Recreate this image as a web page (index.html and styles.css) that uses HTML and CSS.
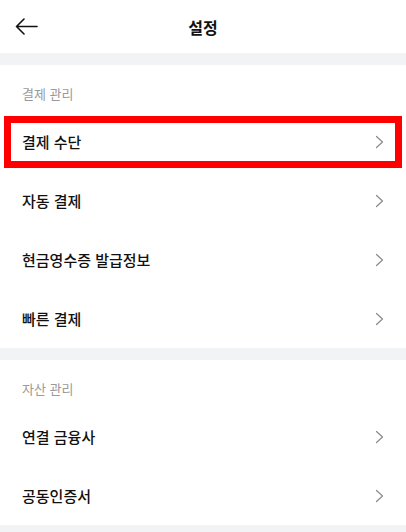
FILE: index.html
```html
<!DOCTYPE html>
<html lang="ko">
<head>
<meta charset="utf-8">
<title>설정</title>
<link rel="stylesheet" href="styles.css">
</head>
<body>
<header class="topbar">
  <button class="back" aria-label="뒤로">
    <svg width="23" height="17" viewBox="0 0 23 17" fill="none" stroke="#111" stroke-width="1.6" stroke-linecap="round" stroke-linejoin="round"><path d="M22 8.5H1.5M9 1L1.5 8.5L9 16"/></svg>
  </button>
  <h1 class="title">설정</h1>
</header>
<div class="divider"></div>
<section class="group">
  <div class="group-title">결제 관리</div>
  <a class="row">결제 수단<svg class="chev" width="9" height="14" viewBox="0 0 9 14" fill="none" stroke="#8a8a8a" stroke-width="1.2" stroke-linecap="round" stroke-linejoin="round"><path d="M1.5 1.5L7.5 7L1.5 12.5"/></svg><span class="mark"></span></a>
  <a class="row">자동 결제<svg class="chev" width="9" height="14" viewBox="0 0 9 14" fill="none" stroke="#8a8a8a" stroke-width="1.2" stroke-linecap="round" stroke-linejoin="round"><path d="M1.5 1.5L7.5 7L1.5 12.5"/></svg></a>
  <a class="row">현금영수증 발급정보<svg class="chev" width="9" height="14" viewBox="0 0 9 14" fill="none" stroke="#8a8a8a" stroke-width="1.2" stroke-linecap="round" stroke-linejoin="round"><path d="M1.5 1.5L7.5 7L1.5 12.5"/></svg></a>
  <a class="row">빠른 결제<svg class="chev" width="9" height="14" viewBox="0 0 9 14" fill="none" stroke="#8a8a8a" stroke-width="1.2" stroke-linecap="round" stroke-linejoin="round"><path d="M1.5 1.5L7.5 7L1.5 12.5"/></svg></a>
</section>
<div class="divider"></div>
<section class="group">
  <div class="group-title">자산 관리</div>
  <a class="row">연결 금융사<svg class="chev" width="9" height="14" viewBox="0 0 9 14" fill="none" stroke="#8a8a8a" stroke-width="1.2" stroke-linecap="round" stroke-linejoin="round"><path d="M1.5 1.5L7.5 7L1.5 12.5"/></svg></a>
  <a class="row">공동인증서<svg class="chev" width="9" height="14" viewBox="0 0 9 14" fill="none" stroke="#8a8a8a" stroke-width="1.2" stroke-linecap="round" stroke-linejoin="round"><path d="M1.5 1.5L7.5 7L1.5 12.5"/></svg></a>
</section>
<div class="divider"></div>
</body>
</html>
```

FILE: styles.css
```css
* { box-sizing: border-box; }
html, body {
  margin: 0;
  padding: 0;
  background: #ffffff;
  font-family: "Noto Sans CJK KR", "Noto Sans", sans-serif;
  color: #111111;
}
.topbar {
  height: 53px;
  display: flex;
  align-items: center;
  justify-content: center;
  position: relative;
}
.back {
  position: absolute;
  left: 15px;
  top: 18px;
  border: 0;
  background: none;
  padding: 0;
  width: 23px;
  height: 17px;
  display: flex;
}
.title {
  margin: 0;
  font-size: 16px;
  font-weight: 700;
  line-height: 20px;
  color: #111;
}
.divider {
  height: 12px;
  background: #f2f3f5;
}
.group {
  display: flex;
  flex-direction: column;
}
.group-title {
  height: 47px;
  padding: 19px 22px 0;
  font-size: 13px;
  line-height: 20px;
  color: #9a9a9a;
}
.row {
  position: relative;
  height: 59px;
  display: flex;
  align-items: center;
  justify-content: space-between;
  padding: 0 22px 0 22px;
  font-size: 15px;
  font-weight: 500;
  color: #111;
  text-decoration: none;
}
.chev {
  display: block;
}
.mark {
  position: absolute;
  left: 4px;
  right: 4px;
  top: 4px;
  bottom: 3px;
  border: 7px solid #ff0000;
}
```
